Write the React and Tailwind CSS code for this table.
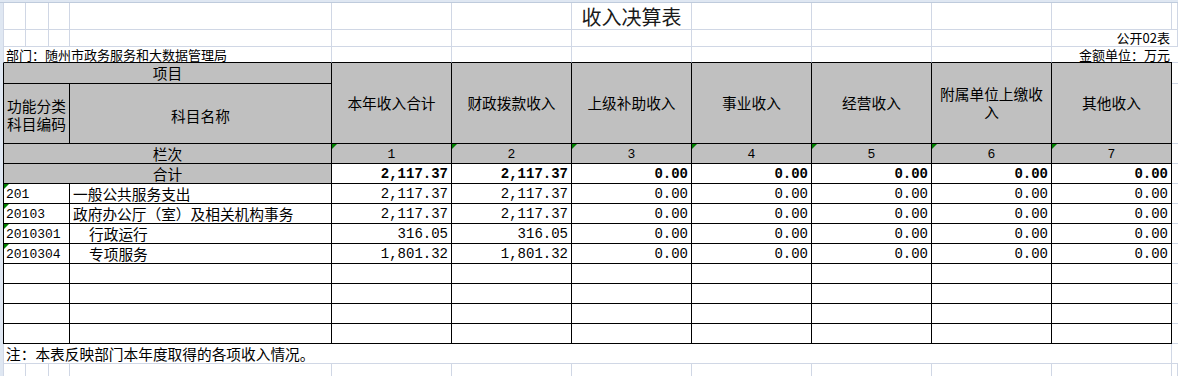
import React from 'react';

const cjk = "font-['Noto_Sans_CJK_SC','Noto_Sans_CJK_TC',sans-serif]";
const mono = "font-['Liberation_Mono','Noto_Sans_CJK_SC',monospace]";

const LT = 'border-[#d0d7e5]';

const rows = [
    { code: '201', name: '一般公共服务支出', indent: false, v: ['2,117.37', '2,117.37', '0.00', '0.00', '0.00', '0.00', '0.00'] },
    { code: '20103', name: '政府办公厅（室）及相关机构事务', indent: false, v: ['2,117.37', '2,117.37', '0.00', '0.00', '0.00', '0.00', '0.00'] },
    { code: '2010301', name: '行政运行', indent: true, v: ['316.05', '316.05', '0.00', '0.00', '0.00', '0.00', '0.00'] },
    { code: '2010304', name: '专项服务', indent: true, v: ['1,801.32', '1,801.32', '0.00', '0.00', '0.00', '0.00', '0.00'] },
    null, null, null, null,
];

const heads = ['本年收入合计', '财政拨款收入', '上级补助收入', '事业收入', '经营收入', null, '其他收入'];
const totals = ['2,117.37', '2,117.37', '0.00', '0.00', '0.00', '0.00', '0.00'];

function Tri() {
    return (
        <svg className="absolute left-0 top-0" width="5" height="5" viewBox="0 0 5 5">
            <polygon points="0,0 5,0 0,5" fill="#008000" />
        </svg>
    );
}

export default function App() {
    const gridTop = Array.from({ length: 12 });

    return (
        <div className={`w-[1178px] h-[376px] overflow-hidden bg-white text-black ${cjk} flex flex-col`}>
            <div className="h-[3px] bg-[#dfe7f2] border-b border-[#bfcbdc] shrink-0" />
            <div className="flex flex-1 min-h-0">
                <div className="w-[3px] bg-[#dfe7f2] shrink-0" />
                <div className="flex-1 grid grid-cols-[23px_23px_21px_262px_120px_120px_120px_120px_120px_120px_120px_1fr] grid-rows-[27px_17px_16px_21px_60px_20px_20px_20px_20px_20px_20px_20px_20px_20px_20px_20px_1fr]">
                    {/* title row */}
                    {gridTop.map((_, i) => (
                        <div key={'t' + i} className={`border-r border-b ${LT} ${i === 0 ? 'border-l' : ''} flex items-center justify-center`}>
                            {i === 6 && <span className="text-[20px] leading-[20px] whitespace-nowrap text-[#1a1a1a] pt-[2px]">收入决算表</span>}
                        </div>
                    ))}

                    {/* 公开02表 row */}
                    {gridTop.map((_, i) => (
                        <div key={'p' + i} className={`border-b ${LT} ${i === 10 ? '' : 'border-r'} ${i === 0 ? 'border-l' : ''} flex items-start justify-end`}>
                            {i === 10 && <span className="text-[13px] leading-[15px] whitespace-nowrap pr-[2px]">公开02表</span>}
                        </div>
                    ))}

                    {/* 部门 row */}
                    <div className={`col-span-4 border-l border-r ${LT} border-b border-b-black flex items-end`}>
                        <span className="text-[13px] leading-[15px] whitespace-nowrap pl-[2px]">部门：随州市政务服务和大数据管理局</span>
                    </div>
                    {[4, 5, 6, 7, 8, 9].map((i) => (
                        <div key={'d' + i} className={`border-r ${LT} border-b border-b-black`} />
                    ))}
                    <div className="border-b border-black flex items-end justify-end">
                        <span className="text-[13px] leading-[15px] whitespace-nowrap pr-[2px]">金额单位：万元</span>
                    </div>
                    <div className={`border-b ${LT}`} />

                    {/* header */}
                    <div className="col-span-4 bg-[#c0c0c0] border-l border-r border-b border-black flex items-center justify-center text-[14.7px] leading-[18px]">
                        项目
                    </div>
                    {heads.map((h, i) => (
                        <div key={'h' + i} className="row-span-2 bg-[#c0c0c0] border-r border-b border-black flex items-center justify-center text-center text-[14.7px] leading-[18px]">
                            {h === null ? (
                                <span>附属单位上缴收<br />入</span>
                            ) : (
                                <span>{h}</span>
                            )}
                        </div>
                    ))}
                    <div className={`border-b ${LT}`} />
                    <div className="col-span-3 bg-[#c0c0c0] border-l border-r border-b border-black flex items-center justify-center text-center text-[14.7px] leading-[18px] pt-[2px]">
                        <span>功能分类<br />科目编码</span>
                    </div>
                    <div className="bg-[#c0c0c0] border-r border-b border-black flex items-center justify-center text-[14.7px] leading-[18px] pt-[4px]">
                        科目名称
                    </div>
                    <div className={`border-b ${LT}`} />

                    {/* 栏次 */}
                    <div className="col-span-4 bg-[#c0c0c0] border-l border-r border-b border-black flex items-end justify-center text-[14.7px] leading-[18px]">
                        栏次
                    </div>
                    {[1, 2, 3, 4, 5, 6, 7].map((n) => (
                        <div key={'n' + n} className={`relative bg-[#c0c0c0] border-r border-b border-black flex items-end justify-center ${mono} text-[13px] leading-[17px]`}>
                            <Tri />
                            {n}
                        </div>
                    ))}
                    <div className={`border-b ${LT}`} />

                    {/* 合计 */}
                    <div className="col-span-4 bg-[#c0c0c0] border-l border-r border-b border-black flex items-end justify-center text-[14.7px] leading-[18px]">
                        合计
                    </div>
                    {totals.map((v, i) => (
                        <div key={'s' + i} className={`border-r border-b border-black flex items-end justify-end pr-[3px] ${mono} font-bold text-[14px] leading-[18px]`}>
                            {v}
                        </div>
                    ))}
                    <div className={`border-b ${LT}`} />

                    {/* data rows */}
                    {rows.map((r, ri) => (
                        <React.Fragment key={'r' + ri}>
                            <div className={`relative col-span-3 border-l border-r border-b border-black flex items-end pl-[2px] ${mono} text-[13px] leading-[17px]`}>
                                {r && <Tri />}
                                {r && r.code}
                            </div>
                            <div className={`border-r border-b border-black flex items-end whitespace-nowrap text-[14.7px] leading-[18px] ${r && r.indent ? 'pl-[19px]' : 'pl-[3px]'}`}>
                                {r && r.name}
                            </div>
                            {Array.from({ length: 7 }).map((_, i) => (
                                <div key={'v' + i} className={`border-r border-b border-black flex items-end justify-end pr-[3px] ${mono} text-[14px] leading-[18px]`}>
                                    {r && r.v[i]}
                                </div>
                            ))}
                            <div className={`border-b ${LT}`} />
                        </React.Fragment>
                    ))}

                    {/* note */}
                    <div className={`col-span-11 border-l border-r border-b ${LT} flex items-end pl-[2px] text-[14.7px] leading-[18px] whitespace-nowrap`}>
                        注：本表反映部门本年度取得的各项收入情况。
                    </div>
                    <div className={`border-b ${LT}`} />

                    {/* trailing row */}
                    {gridTop.map((_, i) => (
                        <div key={'z' + i} className={`border-r ${LT} ${i === 0 ? 'border-l' : ''}`} />
                    ))}
                </div>
            </div>
        </div>
    );
}
